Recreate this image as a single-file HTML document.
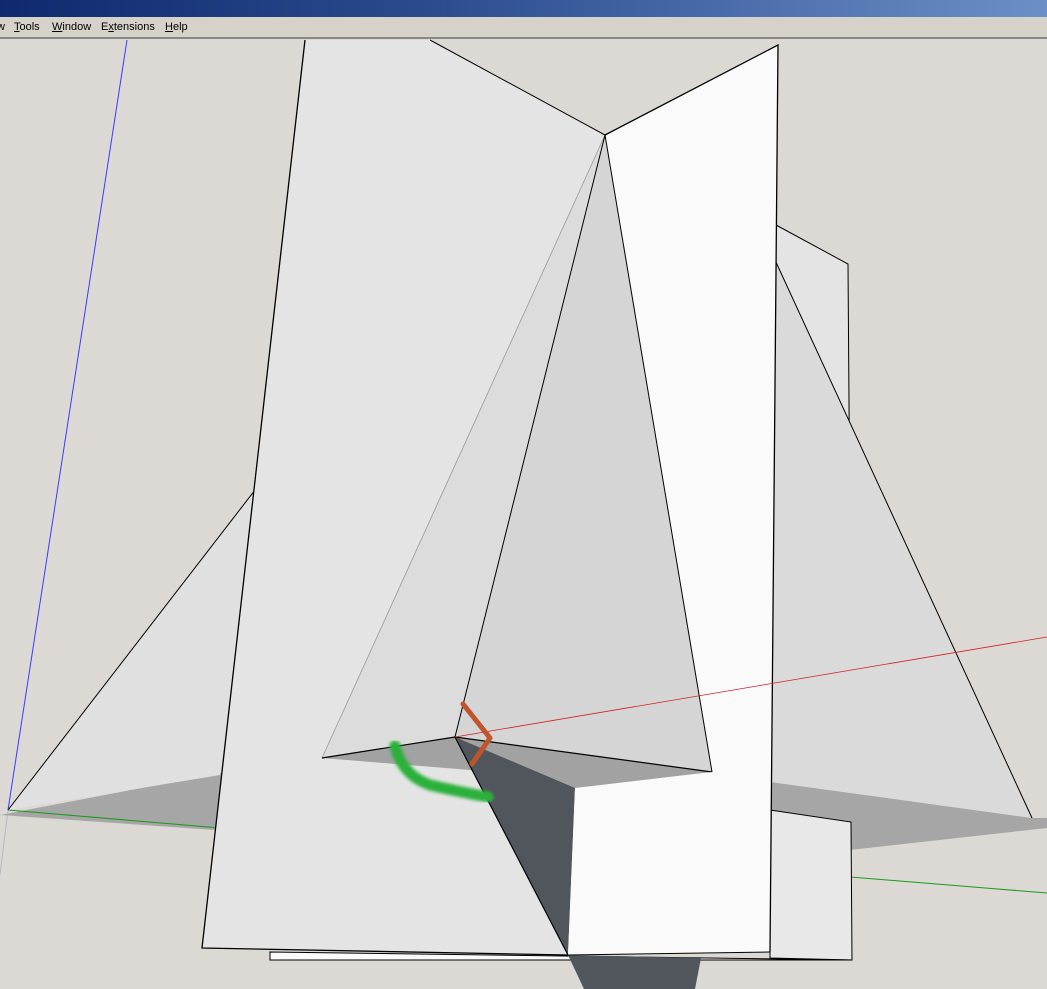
<!DOCTYPE html>
<html><head><style>
html,body{margin:0;padding:0;width:1047px;height:989px;overflow:hidden;background:#dcd9d4;font-family:"Liberation Sans",Tahoma,sans-serif}
#title{position:absolute;left:0;top:0;width:1047px;height:17px;background:linear-gradient(90deg,#10296e 0%,#2a4a8c 40%,#6d8fc8 100%)}
#menu{position:absolute;left:0;top:17px;width:1047px;height:20px;background:#d6d2ca;border-bottom:2px solid #8a8884;font-size:11px;color:#000}
#menu span{position:absolute;top:4px}
svg{position:absolute;left:0;top:0}
</style></head><body>
<svg width="1047" height="989" viewBox="0 0 1047 989">
<defs><filter id="b"><feGaussianBlur stdDeviation="1.6"/></filter></defs>
<rect x="0" y="39" width="1047" height="950" fill="#dcd9d4"/>
<line x1="127" y1="40" x2="8" y2="810" stroke="#3a3aff" stroke-width="1"/>
<line x1="8" y1="810" x2="0" y2="875" stroke="#b8b8c8" stroke-width="1"/>
<polygon points="776,225 848,264 852,820 776,820" fill="#e4e4e4" stroke="#000" stroke-width="1"/>
<polygon points="0,815 220,773 780,780 1032,818 1047,818 1047,828 850,850 215,830" fill="#a6a6a6"/>
<polygon points="8,810 255,490 220,775" fill="#e0e0e0"/>
<line x1="8" y1="810" x2="255" y2="490" stroke="#000"/>
<polygon points="775,260 1032,818 770,782" fill="#dadada"/>
<line x1="775" y1="260" x2="1032" y2="818" stroke="#000"/>
<line x1="8" y1="810" x2="220" y2="828" stroke="#1a9a1a"/>
<line x1="850" y1="877" x2="1047" y2="893" stroke="#1a9a1a"/>
<polygon points="770,810 851,822 852,960 770,958" fill="#e8e8e8" stroke="#000"/>
<polygon points="270,952 852,960 270,960" fill="#fafafa" stroke="#000"/>
<polygon points="305,40 430,40 605,135 570,955 202,948" fill="#e4e4e4"/>
<polyline points="305,40 202,948 568,955" fill="none" stroke="#000" stroke-width="1.3"/>
<line x1="430" y1="40" x2="605" y2="135" stroke="#000"/>
<polygon points="605,135 322,758 455,737" fill="#dcdcdc"/>
<line x1="605" y1="135" x2="322" y2="758" stroke="#999" stroke-width="0.8"/>
<polygon points="605,135 455,737 712,772" fill="#d5d5d5"/>
<line x1="605" y1="135" x2="455" y2="737" stroke="#000"/>
<polygon points="322,758 455,737 712,772 575,788 470,770" fill="#a2a2a2"/>
<polyline points="322,758 455,737 712,772" fill="none" stroke="#000" stroke-width="1.2"/>
<polygon points="455,737 575,788 568,955" fill="#51565d"/>
<line x1="455" y1="737" x2="568" y2="955" stroke="#000" stroke-width="1.2"/>
<polygon points="568,955 701,958 695,989 584,989" fill="#51565d"/>
<polygon points="605,135 778,45 770,952 568,955 575,788 712,772" fill="#fafafa"/>
<polyline points="605,135 778,45 770,952" fill="none" stroke="#000" stroke-width="1.3"/>
<line x1="605" y1="135" x2="712" y2="772" stroke="#000"/>
<line x1="568" y1="955" x2="770" y2="952" stroke="#000"/>
<line x1="455" y1="737" x2="1047" y2="637" stroke="#d02020" stroke-width="0.8"/>
<polyline points="463,704 490,738 472,764" fill="none" stroke="#c0542a" stroke-width="5" stroke-linecap="round" stroke-linejoin="round"/>
<path d="M395,746 Q402,775 430,785 Q460,792 488,797" fill="none" stroke="#2ab03a" stroke-width="11" stroke-linecap="round" filter="url(#b)"/>
</svg>
<div id="title"></div>
<div id="menu"><span style="left:-3px">w</span><span style="left:14px"><u>T</u>ools</span><span style="left:52px"><u>W</u>indow</span><span style="left:101px">E<u>x</u>tensions</span><span style="left:165px"><u>H</u>elp</span></div>
</body></html>
